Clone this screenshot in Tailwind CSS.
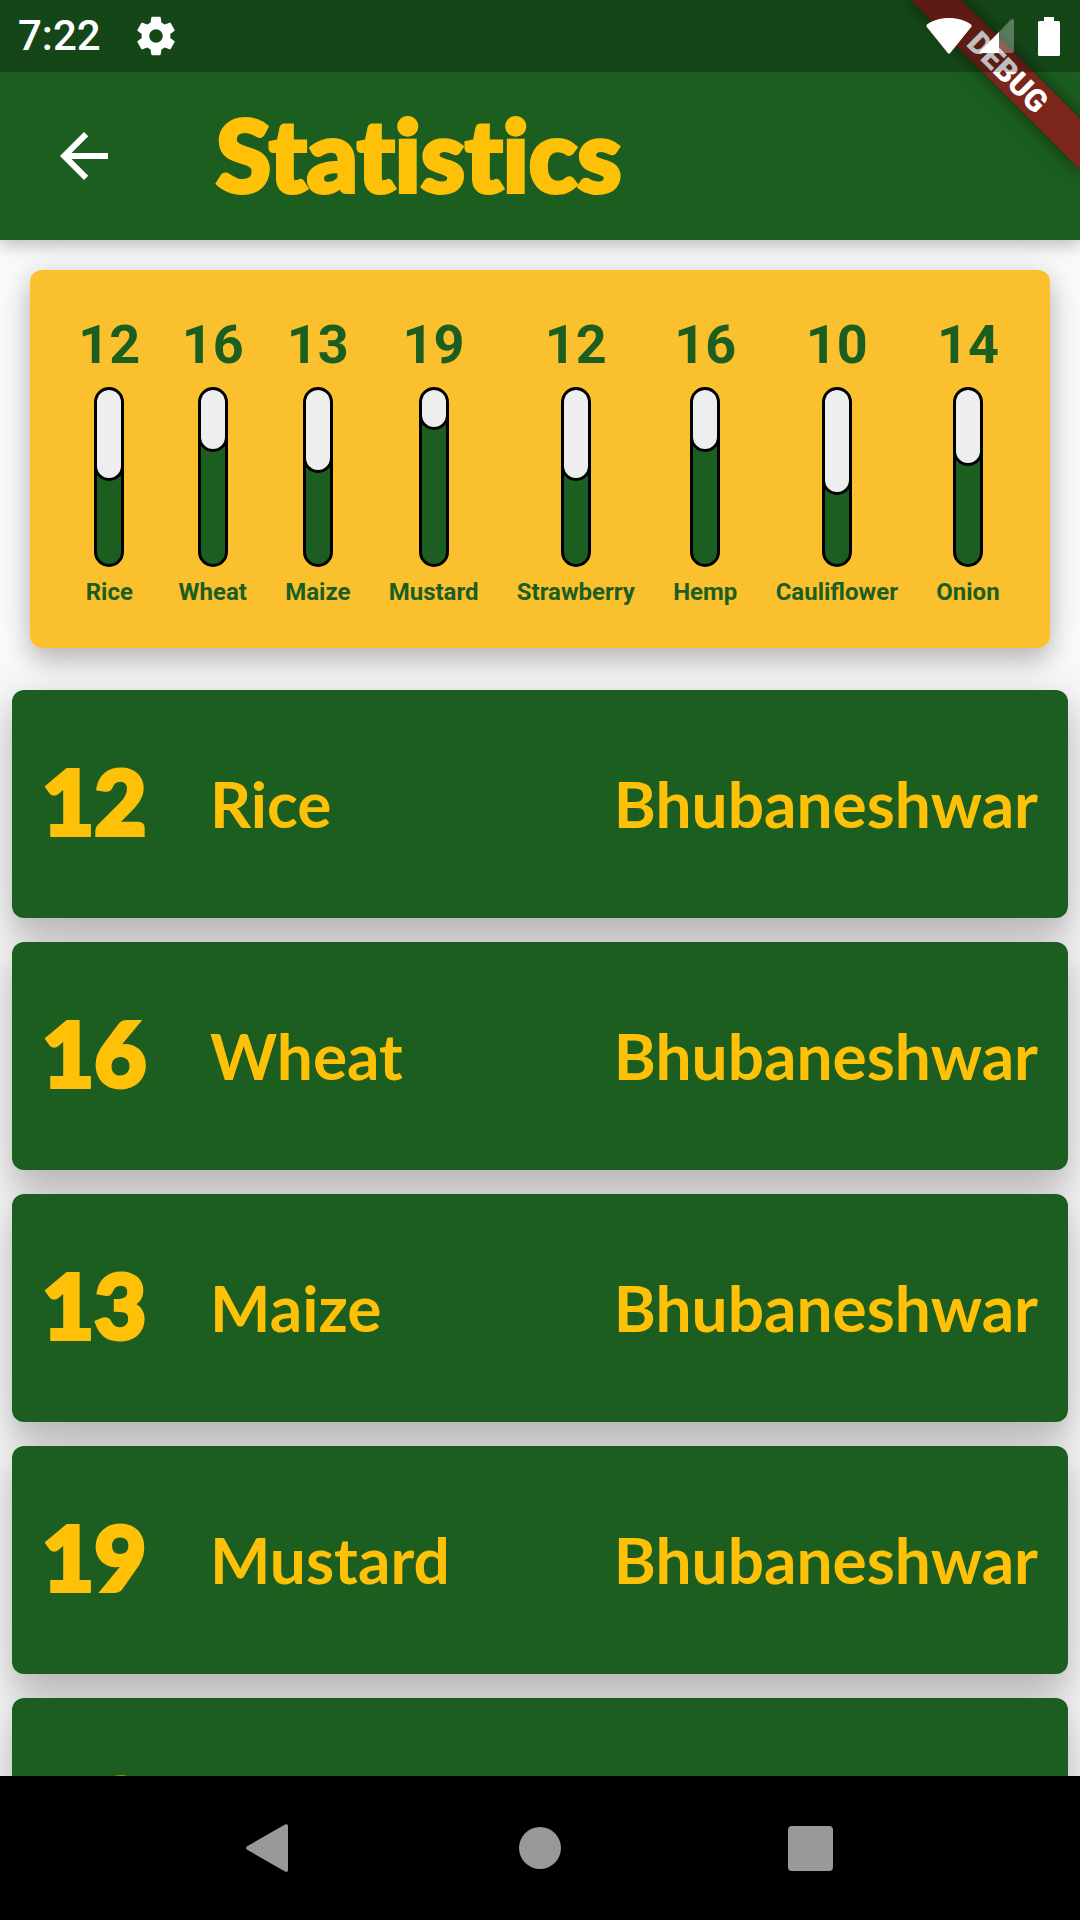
<!DOCTYPE html>
<html lang="en">
<head>
<meta charset="utf-8">
<meta name="viewport" content="width=device-width, initial-scale=1">
<title>Statistics</title>
<script src="https://cdn.jsdelivr.net/npm/@tailwindcss/browser@4"></script>
</head>
<body class="relative flex h-screen flex-col overflow-hidden bg-[#fafafa] font-['Roboto',sans-serif]">

  <!-- Status bar, translucent over the app bar and the ribbon -->
  <div class="absolute inset-x-0 top-0 z-40 flex h-[72px] items-center bg-black/25 pr-[20px] pl-[18px] text-white">
    <span class="text-[42px] leading-[48px] font-medium">7:22</span>
    <svg class="ml-8 size-[46px]" viewBox="0 0 24 24" fill="currentColor" aria-label="Settings"><path d="M19.43 12.98c.04-.32.07-.64.07-.98s-.03-.66-.07-.98l2.11-1.65c.19-.15.24-.42.12-.64l-2-3.46c-.12-.22-.39-.3-.61-.22l-2.49 1c-.52-.4-1.08-.73-1.69-.98l-.38-2.65C14.46 2.18 14.25 2 14 2h-4c-.25 0-.46.18-.49.42l-.38 2.65c-.61.25-1.17.59-1.69.98l-2.49-1c-.23-.09-.49 0-.61.22l-2 3.46c-.13.22-.07.49.12.64l2.11 1.65c-.04.32-.07.65-.07.98s.03.66.07.98l-2.11 1.65c-.19.15-.24.42-.12.64l2 3.46c.12.22.39.3.61.22l2.49-1c.52.4 1.08.73 1.69.98l.38 2.65c.03.24.24.42.49.42h4c.25 0 .46-.18.49-.42l.38-2.65c.61-.25 1.17-.59 1.69-.98l2.49 1c.23.09.49 0 .61-.22l2-3.46c.12-.22.07-.49-.12-.64l-2.11-1.65zM12 15.5c-1.93 0-3.5-1.57-3.5-3.5s1.57-3.5 3.5-3.5 3.5 1.57 3.5 3.5-1.57 3.5-3.5 3.5z"/></svg>
    <svg class="ml-auto h-[36px] w-[46px]" viewBox="0 0 46 36" fill="currentColor" aria-label="Wi-Fi"><path d="M23 0C14 0 6.500 2.500 1 6.500Q0 7.500.8 9L21.800 35Q23 36.500 24.200 35L45.200 9Q46 7.500 45 6.500C39.500 2.500 32 0 23 0Z"/></svg>
    <svg class="ml-2 h-[34px] w-[34px]" viewBox="0 0 34 34" fill="currentColor" aria-label="Mobile signal"><path d="M0 32.500L31 .6Q34-1 34 2.500V32Q34 34 32 34H1Q-1 34 0 32.500Z" opacity=".3"/><path d="M0 32.500L19 13V34H1Q-1 34 0 32.500Z"/></svg>
    <svg class="ml-6 h-[39px] w-[22px]" viewBox="0 0 22 39" fill="currentColor" aria-label="Battery"><path d="M6 0H16V4H20.500Q22 4 22 5.500V37.500Q22 39 20.500 39H1.500Q0 39 0 37.500V5.500Q0 4 1.500 4H6Z"/></svg>
  </div>

  <!-- Debug ribbon -->
  <div class="pointer-events-none absolute top-0 right-0 z-30 size-[240px] overflow-hidden">
    <div class="absolute top-[54px] right-[-48px] flex h-[36px] w-[240px] rotate-45 items-center justify-center bg-[#7b261a] text-[31px] leading-none font-black text-white shadow-[0_0_18px_rgb(0_0_0/0.5)]">DEBUG</div>
  </div>

  <header class="relative z-20 shrink-0 bg-[#1b5e20] pt-[72px] shadow-[0_6px_12px_rgb(0_0_0/0.14),0_3px_24px_rgb(0_0_0/0.12)]">
    <div class="flex h-[168px] items-center pl-12">
      <button type="button" aria-label="Back" class="size-[72px] text-white">
        <svg class="size-full" viewBox="0 0 24 24" fill="currentColor"><path d="M20 11H7.830l5.590-5.590L12 4l-8 8 8 8 1.410-1.410L7.830 13H20v-2z"/></svg>
      </button>
      <h1 class="ml-24 pb-1.5 font-['Lato',sans-serif] text-[100px] leading-[120px] font-black text-[#ffc107] [-webkit-text-stroke:4px_#ffc107] [font-variant-ligatures:no-common-ligatures]">Statistics</h1>
    </div>
  </header>

  <main class="min-h-0 flex-1 overflow-x-hidden overflow-y-auto [scrollbar-width:none]">
    <section aria-label="Crop overview" class="mx-[30px] mt-[30px] rounded-xl shadow-[0_12px_24px_rgb(0_0_0/0.2),0_3px_36px_rgb(0_0_0/0.12)]">
      <ul id="chart" class="relative z-10 flex h-[378px] justify-evenly rounded-xl bg-[#fbc02d] pr-3 pl-2.5 pt-[43px] font-bold text-[#1b5e20]"></ul>
    </section>
    <ul id="list" class="mx-3 mt-[42px] flex flex-col gap-6 font-['Lato',sans-serif] text-[#ffc107]"></ul>
  </main>

  <nav aria-label="System" class="relative z-20 flex h-[144px] shrink-0 justify-center bg-black text-[#999]">
    <div class="grid w-3/4 grid-cols-3 items-center justify-items-center">
      <button type="button" aria-label="Back" class="size-12"><svg class="size-full" viewBox="0 0 48 48" fill="currentColor"><path d="M1.200 22.200L39 .6Q42-.8 42 2V46Q42 48.800 39 47.400L1.200 25.800Q-1 24 1.200 22.200Z"/></svg></button>
      <button type="button" aria-label="Home" class="size-[42px] rounded-full bg-[#999]"></button>
      <button type="button" aria-label="Recent apps" class="size-[45px] rounded-[4px] bg-[#999]"></button>
    </div>
  </nav>

<script>
  const crops = [
    ['Rice', 12], ['Wheat', 16], ['Maize', 13], ['Mustard', 19],
    ['Strawberry', 12], ['Hemp', 16], ['Cauliflower', 10], ['Onion', 14],
  ];
  const MAX = 25;

  document.getElementById('chart').innerHTML = crops.map(([name, n]) => `
    <li class="flex flex-col items-center">
      <span class="text-[54px] leading-[64px]">${n}</span>
      <div class="mt-2.5 h-[180px] w-[30px] overflow-hidden rounded-full border-[3px] border-black bg-[#1b5e20]">
        <div class="-mx-[3px] -mt-[3px] rounded-full border-[3px] border-black bg-[#eee]" style="height:${(MAX - n) / MAX * 180}px"></div>
      </div>
      <span class="mt-2.5 text-[24px] leading-[30px]">${name}</span>
    </li>`).join('');

  document.getElementById('list').innerHTML = crops.slice(0, 5).map(([name, n]) => `
    <li class="rounded-xl shadow-[0_18px_30px_rgb(0_0_0/0.16),0_12px_60px_6px_rgb(0_0_0/0.14)]">
      <div class="relative z-10 flex h-[228px] items-center rounded-xl bg-[#1b5e20] px-[30px]">
        <span class="w-[168px] pb-2 text-[90px] leading-none font-black [-webkit-text-stroke:4px_#ffc107]">${n}</span>
        <span class="text-[64px] leading-[76px] font-bold">${name}</span>
        <span class="ml-auto text-[64px] leading-[76px] font-bold">Bhubaneshwar</span>
      </div>
    </li>`).join('');
</script>
</body>
</html>
